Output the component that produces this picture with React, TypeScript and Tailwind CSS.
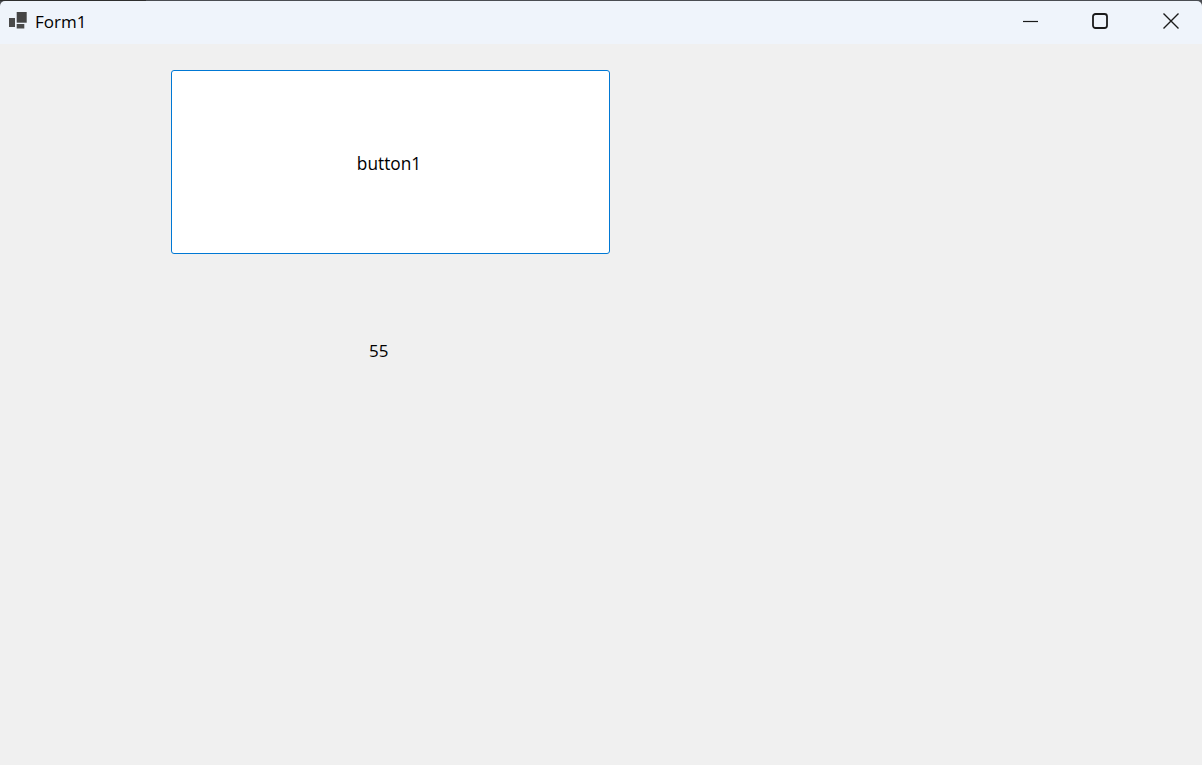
export default function App() {
  return (
    <div className="flex h-[765px] w-[1202px] flex-col overflow-hidden bg-[#f0f0f0] font-['Open_Sans','Noto_Sans',sans-serif] text-black">
      {/* Title bar */}
      <div className="bg-[#4a4d52]">
        <div className="h-px w-[146px] bg-[#2e2e2e]" />
        <div className="flex h-[43px] items-center rounded-t-[5px] bg-[#eff4fb] pl-[9px]">
          <svg width="18" height="18" viewBox="0 0 18 18" className="mb-[3px]">
            <rect x="0" y="6" width="6" height="9" fill="#4a4a4a" />
            <rect x="7.7" y="0" width="10" height="10.7" fill="#454545" />
            <rect x="7.7" y="12" width="7.6" height="4.5" fill="#4a4a4a" />
          </svg>
          <span className="mb-[2px] ml-2 text-[17px] leading-none">Form1</span>
          <div className="ml-auto flex items-center">
            <button className="flex h-[43px] w-[60px] items-center justify-center pb-[3px]">
              <svg width="16" height="16" viewBox="0 0 16 16">
                <path d="M0 8.5H15" stroke="#1a1a1a" strokeWidth="1.2" fill="none" />
              </svg>
            </button>
            <button className="flex h-[43px] w-[78px] items-center justify-center pb-[3px]">
              <svg width="16" height="16" viewBox="0 0 16 16">
                <rect x="1" y="1" width="14" height="14" rx="2.5" stroke="#1a1a1a" strokeWidth="1.8" fill="none" />
              </svg>
            </button>
            <button className="flex h-[43px] w-[63px] items-center justify-center pb-[3px]">
              <svg width="16" height="16" viewBox="0 0 16 16">
                <path d="M0.5 0.5L15.5 15.5M15.5 0.5L0.5 15.5" stroke="#1a1a1a" strokeWidth="1.4" fill="none" />
              </svg>
            </button>
          </div>
        </div>
      </div>

      {/* Form body */}
      <div className="flex flex-col items-start pl-[171px] pt-[26px]">
        <button className="flex h-[184px] w-[439px] items-center justify-center rounded-[3px] border border-[#0078d4] bg-white pr-[3px] pt-[4px] text-[17.3px] leading-none">
          button1
        </button>
        <span className="ml-[198px] mt-[87px] text-[17px] leading-[20px]">55</span>
      </div>
    </div>
  )
}
